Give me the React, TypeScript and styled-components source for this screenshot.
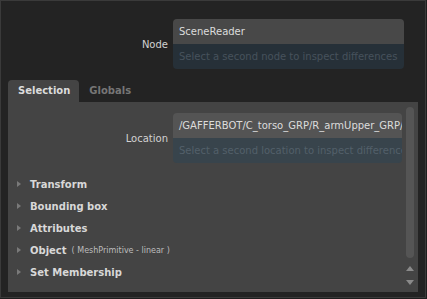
import React from "react";
import styled, { createGlobalStyle } from "styled-components";

const Global = createGlobalStyle`
  html, body { margin: 0; padding: 0; background: #1e1e1e; }
  body { font-family: "DejaVu Sans", "Liberation Sans", sans-serif; }
`;

const Window = styled.div`
  box-sizing: border-box;
  width: 426px;
  height: 298px;
  background: #232323;
  border: 1px solid #3a3a3a;
  display: flex;
  flex-direction: column;
  padding: 18px 0 5px 0;
`;

const Row = styled.div<{ $labelWidth: number }>`
  display: grid;
  grid-template-columns: ${(p) => p.$labelWidth}px 1fr;
  column-gap: 5px;
  align-items: center;
`;

const Label = styled.div`
  text-align: right;
  font-size: 10px;
  color: #d2d2d2;
`;

const Field = styled.div<{ $width: number; $top: string; $bottom: string; $hint: string }>`
  width: ${(p) => p.$width}px;
  border-radius: 4px;
  overflow: hidden;
  display: flex;
  flex-direction: column;
  font-size: 10px;
  & > div {
    height: 25px;
    line-height: 25px;
    padding-left: 6px;
    white-space: nowrap;
    overflow: hidden;
  }
  & > div:first-child {
    background: ${(p) => p.$top};
    color: #dcdcdc;
  }
  & > div:last-child {
    background: ${(p) => p.$bottom};
    color: ${(p) => p.$hint};
  }
`;

const TabBar = styled.div`
  display: flex;
  margin: 11px 0 0 7px;
  height: 22px;
`;

const Tab = styled.div<{ $active?: boolean }>`
  padding: 0 9px 0 10px;
  line-height: 22px;
  font-size: 10px;
  font-weight: bold;
  border-radius: 4px 4px 0 0;
  background: ${(p) => (p.$active ? "#444444" : "transparent")};
  color: ${(p) => (p.$active ? "#dcdcdc" : "#767676")};
`;

const Panel = styled.div`
  margin: 0 7px 0 7px;
  flex: 1;
  background: #444444;
  display: flex;
  padding-right: 4px;
`;

const Content = styled.div`
  flex: 1;
  padding-top: 11px;
  display: flex;
  flex-direction: column;
`;

const Sections = styled.div`
  margin-top: 10px;
  display: flex;
  flex-direction: column;
`;

const Section = styled.div`
  height: 22px;
  display: flex;
  align-items: center;
  padding-left: 9px;
  font-size: 10px;
  font-weight: bold;
  color: #d8d8d8;
`;

const Arrow = styled.span`
  width: 0;
  height: 0;
  border-top: 3px solid transparent;
  border-bottom: 3px solid transparent;
  border-left: 4px solid #7a7a7a;
  margin-right: 9px;
`;

const Sub = styled.span`
  font-size: 8px;
  font-weight: normal;
  color: #bdbdbd;
  margin-left: 5px;
`;

const ScrollCol = styled.div`
  width: 8px;
  margin-left: 4px;
  padding-top: 5px;
  display: flex;
  flex-direction: column;
  align-items: center;
`;

const Thumb = styled.div`
  width: 8px;
  height: 151px;
  border-radius: 4px;
  background: #555555;
`;

const ScrollArrow = styled.div<{ $down?: boolean }>`
  width: 0;
  height: 0;
  border-left: 4px solid transparent;
  border-right: 4px solid transparent;
  ${(p) =>
    p.$down
      ? "border-top: 5px solid #8a8a8a; margin-top: 9px;"
      : "border-bottom: 5px solid #8a8a8a; margin-top: 8px;"}
`;

const sections: { name: string; sub?: string }[] = [
  { name: "Transform" },
  { name: "Bounding box" },
  { name: "Attributes" },
  { name: "Object", sub: "( MeshPrimitive - linear )" },
  { name: "Set Membership" },
];

export default function App() {
  return (
    <>
      <Global />
      <Window>
        <Row $labelWidth={167}>
          <Label>Node</Label>
          <Field $width={231} $top="#484848" $bottom="#263038" $hint="#46525c">
            <div>SceneReader</div>
            <div>Select a second node to inspect differences</div>
          </Field>
        </Row>
        <TabBar>
          <Tab $active>Selection</Tab>
          <Tab>Globals</Tab>
        </TabBar>
        <Panel>
          <Content>
            <Row $labelWidth={160}>
              <Label>Location</Label>
              <Field $width={229} $top="#545454" $bottom="#38444c" $hint="#53606a">
                <div>/GAFFERBOT/C_torso_GRP/R_armUpper_GRP/R_armLower_GRP</div>
                <div>Select a second location to inspect differences</div>
              </Field>
            </Row>
            <Sections>
              {sections.map((s) => (
                <Section key={s.name}>
                  <Arrow />
                  {s.name}
                  {s.sub && <Sub>{s.sub}</Sub>}
                </Section>
              ))}
            </Sections>
          </Content>
          <ScrollCol>
            <Thumb />
            <ScrollArrow />
            <ScrollArrow $down />
          </ScrollCol>
        </Panel>
      </Window>
    </>
  );
}
